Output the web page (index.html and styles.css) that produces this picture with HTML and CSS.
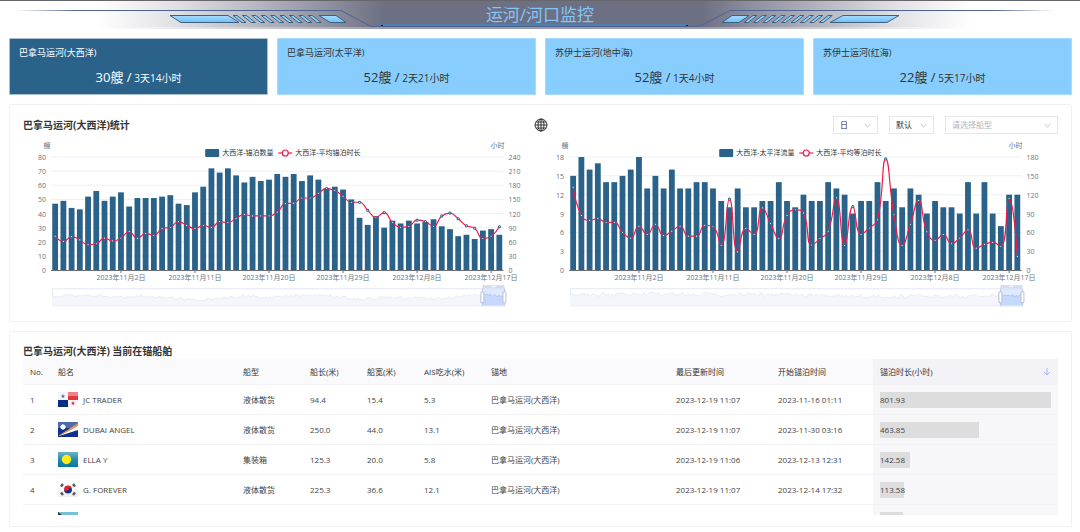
FILE: index.html
```html
<!DOCTYPE html>
<html lang="zh-CN">
<head>
<meta charset="utf-8">
<meta name="viewport" content="width=device-width, initial-scale=1">
<title>运河/河口监控</title>
<link rel="stylesheet" href="styles.css">
</head>
<body>
<header class="banner">
  <svg class="banner-art" viewBox="0 0 1080 29" preserveAspectRatio="none" aria-hidden="true">
    <defs>
      <linearGradient id="bg" x1="0" x2="1" y1="0" y2="0">
        <stop offset="0.09" stop-color="#fff"/>
        <stop offset="0.15" stop-color="#e6e6ea"/>
        <stop offset="0.23" stop-color="#bcbcc6"/>
        <stop offset="0.3" stop-color="#9192a1"/>
        <stop offset="0.355" stop-color="#6d6f83"/>
        <stop offset="0.65" stop-color="#6d6f83"/>
        <stop offset="0.7" stop-color="#9192a1"/>
        <stop offset="0.77" stop-color="#bcbcc6"/>
        <stop offset="0.84" stop-color="#e6e6ea"/>
        <stop offset="0.9" stop-color="#fff"/>
      </linearGradient>
      <linearGradient id="edge" x1="0" x2="1" y1="0" y2="0">
        <stop offset="0" stop-color="#4f6390" stop-opacity="0"/>
        <stop offset="0.06" stop-color="#4f6390"/>
        <stop offset="0.94" stop-color="#4f6390"/>
        <stop offset="1" stop-color="#4f6390" stop-opacity="0"/>
      </linearGradient>
      <linearGradient id="glow" x1="0" x2="0" y1="0" y2="1">
        <stop offset="0" stop-color="#a6dbff"/>
        <stop offset="1" stop-color="#6fc0fb"/>
      </linearGradient>
    </defs>
    <rect width="1080" height="29" fill="url(#bg)"/>
    <rect y="27" width="1080" height="2" fill="#fff" opacity="0.3"/>
    <rect width="1080" height="1" fill="#66666b"/>
    <path d="M15 10.5H341L371 26.5H699L730 10.5H1055" fill="none" stroke="url(#edge)"/>
    <path d="M382 25H688" stroke="#4785b5" stroke-width="2" opacity="0.8"/>
    <path d="M381 25.500h2M686 25.500h2" stroke="#0d1f3a"/>
    <g fill="url(#glow)" stroke="#3e617f">
      <path d="M170 15.500H228L239 22.500H181Z"/>
      <path d="M319 15.500H336L346 22.500H330Z"/>
      <path d="M722 22.500L732 15.500H749L739 22.500Z"/>
      <path d="M830 22.500L843 15.500H899L887 22.500Z"/>
    </g>
    <g id="stripes" fill="#8fd1ff" stroke="#3e617f"></g>
  </svg>
  <h1 class="banner-title">运河/河口监控</h1>
</header>

<main class="page">
  <section class="cards">
    <article class="card card-active"><h2 class="card-name">巴拿马运河(大西洋)</h2><p class="card-value"><span class="card-count">30艘 /</span> 3天14小时</p></article>
    <article class="card"><h2 class="card-name">巴拿马运河(太平洋)</h2><p class="card-value"><span class="card-count">52艘 /</span> 2天21小时</p></article>
    <article class="card"><h2 class="card-name">苏伊士运河(地中海)</h2><p class="card-value"><span class="card-count">52艘 /</span> 1天4小时</p></article>
    <article class="card"><h2 class="card-name">苏伊士运河(红海)</h2><p class="card-value"><span class="card-count">22艘 /</span> 5天17小时</p></article>
  </section>

  <section class="panel">
    <div class="toolbar">
      <h2 class="panel-title">巴拿马运河(大西洋)统计</h2>
      <svg class="globe" viewBox="0 0 14 14" fill="none" stroke="#333" aria-hidden="true">
        <circle cx="7" cy="7" r="6"/><ellipse cx="7" cy="7" rx="3" ry="6"/><path d="M7 1V13M1 7H13M2 4H12M2 10H12"/>
      </svg>
      <div class="filters">
        <label class="picker"><select class="picker-input" aria-label="周期"><option>日</option></select><svg class="chevron" viewBox="0 0 8 8" aria-hidden="true"><path d="M1 2L4 6L7 2"/></svg></label>
        <label class="picker"><select class="picker-input" aria-label="范围"><option>默认</option></select><svg class="chevron" viewBox="0 0 8 8" aria-hidden="true"><path d="M1 2L4 6L7 2"/></svg></label>
        <label class="picker picker-wide"><select class="picker-input picker-empty" aria-label="船型"><option>请选择船型</option></select><svg class="chevron" viewBox="0 0 8 8" aria-hidden="true"><path d="M1 2L4 6L7 2"/></svg></label>
      </div>
    </div>
    <div class="charts">
      <svg class="chart" id="chart-anchor" viewBox="0 0 517 175" role="img" aria-label="锚泊数量与平均锚泊时长"></svg>
      <svg class="chart" id="chart-flow" viewBox="0 0 517 175" role="img" aria-label="流量与平均等泊时长"></svg>
    </div>
  </section>

  <section class="panel panel-table">
    <h2 class="panel-title">巴拿马运河(大西洋) 当前在锚船舶</h2>
    <div class="table-view">
      <table class="ships">
        <colgroup><col class="w-no"><col><col class="w-type"><col class="w-len"><col class="w-beam"><col class="w-draft"><col><col class="w-time"><col class="w-time"><col></colgroup>
        <thead>
          <tr><th>No.</th><th>船名</th><th>船型</th><th>船长(米)</th><th>船宽(米)</th><th>AIS吃水(米)</th><th>锚地</th><th>最后更新时间</th><th>开始锚泊时间</th>
          <th class="sorted"><button class="sort" type="button">锚泊时长(小时)<svg class="sort-icon" viewBox="0 0 8 8" aria-hidden="true"><path d="M4 0V7M1 4L4 7L7 4"/></svg></button></th></tr>
        </thead>
        <tbody>
          <tr><td>1</td><td><div class="ship"><svg class="flag" viewBox="0 0 20 15"><rect width="20" height="15" fill="#f5f5f7"/><rect x="10" width="10" height="8" fill="#e2393f"/><rect x="10" width="10" height="4" fill="#ee8284"/><rect y="8" width="10" height="7" fill="#0b2c84"/><path d="M5 2l.6 1.400 1.400.1-1 1 .3 1.500L5 5.200 3.700 6l.3-1.500-1-1 1.400-.1z" fill="#4f6fb8"/><path d="M15 9l.6 1.400 1.400.1-1 1 .3 1.500-1.300-.8-1.300.8.3-1.500-1-1 1.400-.1z" fill="#d8323a"/></svg>JC TRADER</div></td><td>液体散货</td><td>94.4</td><td>15.4</td><td>5.3</td><td>巴拿马运河(大西洋)</td><td>2023-12-19 11:07</td><td>2023-11-16 01:11</td><td class="sorted"><div class="meter" style="width:100%">801.93</div></td></tr>
          <tr><td>2</td><td><div class="ship"><svg class="flag" viewBox="0 0 20 15"><rect width="20" height="15" fill="#12318a"/><rect width="20" height="6" fill="#4f69ae"/><path d="M0 14L20 1V4L1 14Z" fill="#f0924a"/><path d="M1 14L20 4V8L1 14Z" fill="#fff"/><circle cx="5" cy="5" r="2.500" fill="#fff"/><path d="M5 2V8M2 5H8" stroke="#fff" stroke-width=".6"/></svg>DUBAI ANGEL</div></td><td>液体散货</td><td>250.0</td><td>44.0</td><td>13.1</td><td>巴拿马运河(大西洋)</td><td>2023-12-19 11:07</td><td>2023-11-30 03:16</td><td class="sorted"><div class="meter" style="width:57.8%">463.85</div></td></tr>
          <tr><td>3</td><td><div class="ship"><svg class="flag" viewBox="0 0 20 15"><defs><linearGradient id="sea" x1="0" x2="0" y1="0" y2="1"><stop offset="0" stop-color="#6db5c9"/><stop offset=".5" stop-color="#208dae"/><stop offset="1" stop-color="#08789c"/></linearGradient></defs><rect width="20" height="15" fill="url(#sea)"/><circle cx="8.500" cy="7.500" r="4.700" fill="#ffe919"/></svg>ELLA Y</div></td><td>集装箱</td><td>125.3</td><td>20.0</td><td>5.8</td><td>巴拿马运河(大西洋)</td><td>2023-12-19 11:06</td><td>2023-12-13 12:31</td><td class="sorted"><div class="meter" style="width:17.8%">142.58</div></td></tr>
          <tr><td>4</td><td><div class="ship"><svg class="flag" viewBox="0 0 20 15"><defs><linearGradient id="paper" x1="0" x2="0" y1="0" y2="1"><stop offset="0" stop-color="#fff"/><stop offset="1" stop-color="#eeeeef"/></linearGradient></defs><rect width="20" height="15" fill="url(#paper)"/><path d="M6 7.500a4 4 0 0 1 8 0Z" fill="#d8262f"/><path d="M6 7.500a4 4 0 0 0 8 0Z" fill="#12318a"/><circle cx="8" cy="7.500" r="1.500" fill="#d8262f"/><circle cx="12" cy="7.500" r="1.500" fill="#12318a"/><path d="M3 4.500L5 2M15 2L17 4.500M3 10.500L5 13M15 13L17 10.500" stroke="#555" stroke-width="2.400"/></svg>G. FOREVER</div></td><td>液体散货</td><td>225.3</td><td>36.6</td><td>12.1</td><td>巴拿马运河(大西洋)</td><td>2023-12-19 11:07</td><td>2023-12-14 17:32</td><td class="sorted"><div class="meter" style="width:14.2%">113.58</div></td></tr>
          <tr><td></td><td><div class="ship"><svg class="flag" viewBox="0 0 20 15"><rect width="20" height="15" fill="#78c1d4"/><rect y="5" width="20" height="5" fill="#ffe04a"/><path d="M0 0L10 7.500L0 15Z" fill="#333"/></svg></div></td><td></td><td></td><td></td><td></td><td></td><td></td><td></td><td class="sorted"><div class="meter" style="width:13.4%"></div></td></tr>
        </tbody>
      </table>
    </div>
  </section>
</main>
<script src="charts.js"></script>
</body>
</html>
```
FILE: styles.css
```css
* { box-sizing: border-box; }

body {
  margin: 0;
  background: #fff;
  color: #333;
  font: 8px/12px "Open Sans", "Noto Sans CJK SC", sans-serif;
}

h1, h2, p { margin: 0; font-weight: 400; }

.banner { display: grid; height: 29px; }
.banner-art, .banner-title { grid-area: 1 / 1; }
.banner-art { width: 100%; height: 29px; display: block; }
.banner-title {
  place-self: center;
  font-size: 17px;
  line-height: 28px;
  color: #7fc6fb;
  z-index: 1;
}

.page { display: grid; gap: 9px; padding: 9px 8px 5px 9px; }

.cards { display: grid; grid-template-columns: repeat(4, 1fr); gap: 9px; }
.card {
  display: grid;
  gap: 8px;
  padding: 7px 9px 6px;
  border: 1px solid #a5d9fd;
  border-radius: 1px;
  background: #87ceff;
}
.card-active { background: #2a6289; border-color: #a9c0d0; color: #fff; }
.card-name { font-size: 9px; line-height: 13px; }
.card-value { font-size: 10px; line-height: 20px; text-align: center; }
.card-count { font-size: 13px; }

.panel {
  border: 1px solid #f1f1f3;
  border-radius: 2px;
  padding: 11px 13px 12px;
}
.panel-title { font-size: 10px; line-height: 16px; font-weight: 700; }

.toolbar { display: grid; grid-template-columns: 1fr auto 1fr; align-items: center; }
.globe { width: 14px; height: 14px; }
.filters { display: flex; gap: 11px; justify-content: flex-end; }
.picker {
  display: grid;
  align-items: center;
  width: 45px;
  height: 18px;
  border: 1px solid #e6e6ea;
}
.picker-wide { width: 113px; }
.picker-input, .chevron { grid-area: 1 / 1; }
.picker-input {
  appearance: none;
  width: 100%;
  border: 0;
  padding: 0 6px;
  background: transparent;
  color: #333;
  font: inherit;
}
.picker-empty { color: #b5b5bb; }
.chevron {
  width: 7px;
  height: 7px;
  margin-right: 6px;
  justify-self: end;
  pointer-events: none;
  fill: none;
  stroke: #c5c5cb;
}

.charts { display: grid; grid-template-columns: 1fr 1fr; }
.chart { display: block; width: 100%; }
.chart text { font-size: 7px; fill: #6e7079; }
.chart .legend { fill: #333; }

.panel-table { padding: 11px 13px; }
.table-view { height: 156px; overflow: hidden; }
.ships {
  width: 100%;
  table-layout: fixed;
  border-collapse: separate;
  border-spacing: 0;
  color: #444;
}
.w-no { width: 28px; }
.w-type, .w-draft { width: 67px; }
.w-len, .w-beam { width: 57px; }
.w-time { width: 102px; }
.ships th, .ships td {
  padding: 0 7px;
  border-bottom: 1px solid #f3f3f6;
  text-align: left;
  white-space: nowrap;
}
.ships th { height: 26px; background: #fafafc; color: #333; font-weight: 400; }
.ships td { height: 30px; }
.ships td.sorted { background: #f7f7f9; }
.ships th.sorted { background: #f2f2f7; }
.sort {
  display: flex;
  justify-content: space-between;
  align-items: center;
  width: 100%;
  padding: 0;
  border: 0;
  background: none;
  color: inherit;
  font: inherit;
}
.sort-icon { width: 8px; height: 8px; fill: none; stroke: #a3b4fb; }
.ship { display: flex; align-items: center; gap: 5px; }
.flag { width: 20px; height: 15px; }
.meter { height: 16px; line-height: 16px; background: #ddd; }
```
FILE: charts.js
```js
const NS = 'http://www.w3.org/2000/svg';
const BAR = '#2a6289';
const LINE = '#f5194b';

function add(parent, name, attrs, text) {
  const el = document.createElementNS(NS, name);
  for (const key in attrs) el.setAttribute(key, attrs[key]);
  if (text !== undefined) el.textContent = text;
  parent.appendChild(el);
  return el;
}

// Smooth path whose control points never leave the box between neighbours.
function smoothPath(pts) {
  const clamp = (v, a, b) => Math.max(Math.min(a, b), Math.min(Math.max(a, b), v));
  let d = `M${pts[0]}`;
  let out = pts[0];
  for (let i = 1; i < pts.length; i++) {
    const p = pts[i], prev = pts[i - 1], next = pts[i + 1];
    let inn = p, nextOut = p;
    if (next) {
      const lp = Math.hypot(p[0] - prev[0], p[1] - prev[1]);
      const ln = Math.hypot(next[0] - p[0], next[1] - p[1]);
      const r = ln / (ln + lp);
      nextOut = p.map((v, k) => clamp(v + (next[k] - prev[k]) * 0.5 * r, v, next[k]));
      inn = p.map((v, k) => clamp(v - (nextOut[k] - v) * lp / ln, v, prev[k]));
      nextOut = p.map((v, k) => v + (v - inn[k]) * ln / lp);
    }
    d += `C${out} ${inn} ${p}`;
    out = nextOut;
  }
  return d;
}

function overview(seed, spiky) {
  const pts = [];
  let s = seed;
  for (let x = 0; x <= 453; x += 2) {
    s = (s * 16807) % 2147483647;
    const noise = s / 2147483647 - 0.5;
    const wave = spiky ? Math.sin(x / 70) : Math.sin(x / 13) + Math.sin(x / 31) * 1.5;
    pts.push([29 + x, (spiky ? 161 : 163) - wave + noise * (spiky ? 4 : 3)]);
  }
  return pts;
}

function draw(id, o) {
  const svg = document.getElementById(id);
  const left = 28, width = 452, top = 23, bottom = 136, step = width / o.bars.length;
  const rows = o.left.length - 1;
  for (let i = 0; i <= rows; i++) {
    const y = bottom - (bottom - top) * i / rows;
    add(svg, 'path', { d: `M${left} ${y}H${left + width}`, stroke: '#eaeff8' });
    add(svg, 'text', { x: 23, y: y + 3, 'text-anchor': 'end' }, o.left[i]);
    add(svg, 'text', { x: 485, y: y + 3 }, o.right[i]);
  }
  add(svg, 'text', { x: 24, y: 14, 'text-anchor': 'middle' }, '艘');
  add(svg, 'text', { x: 474, y: 14, 'text-anchor': 'middle' }, '小时');

  const cx = i => left + step * (i + 0.5);
  const max = o.left[rows], maxLine = o.right[rows];
  o.bars.forEach((v, i) => {
    const h = (bottom - top) * v / max;
    add(svg, 'rect', { x: cx(i) - 2.9, y: bottom - h, width: 5.8, height: h, fill: BAR });
  });
  add(svg, 'path', { d: `M${left} 136.5H${left + width}`, stroke: '#6e7079' });
  ['11月2日', '11月11日', '11月20日', '11月29日', '12月8日', '12月17日'].forEach((t, k) => {
    const x = cx(8 + 9 * k);
    add(svg, 'path', { d: `M${x} 136v3`, stroke: '#6e7079' });
    add(svg, 'text', { x, y: 146, 'text-anchor': 'middle' }, '2023年' + t);
  });

  const pts = o.line.map((v, i) => [cx(i), bottom - (bottom - top) * v / maxLine]);
  add(svg, 'path', { d: smoothPath(pts), fill: 'none', stroke: LINE, 'stroke-width': 1.2 });
  pts.forEach(p => add(svg, 'circle', { cx: p[0], cy: p[1], r: 1.1, fill: '#fff', stroke: BAR, 'stroke-width': 1 }));

  const lx = o.legendX;
  add(svg, 'rect', { x: lx, y: 15, width: 14, height: 8, rx: 1, fill: BAR });
  add(svg, 'text', { x: lx + 17, y: 21, class: 'legend' }, o.names[0]);
  const mx = lx + o.legendGap;
  add(svg, 'path', { d: `M${mx} 19h14`, stroke: LINE, 'stroke-width': 1.2 });
  add(svg, 'circle', { cx: mx + 7, cy: 19, r: 3, fill: '#fff', stroke: LINE, 'stroke-width': 1.2 });
  add(svg, 'text', { x: mx + 17, y: 21, class: 'legend' }, o.names[1]);

  // Zoom slider
  const wave = overview(o.seed, o.spiky);
  const area = `M29 171L${wave.join('L')}V171Z`;
  add(svg, 'rect', { x: 29.5, y: 154.5, width: 452, height: 17, rx: 1, fill: '#fff', stroke: '#e3e8f6' });
  add(svg, 'path', { d: area, fill: '#f4f6fb' });
  add(svg, 'path', { d: `M${wave.join('L')}`, fill: 'none', stroke: '#dfe5f2', 'stroke-width': 0.7 });
  add(svg, 'rect', { x: 459, y: 154, width: 22, height: 18, fill: '#d3e0fd', opacity: 0.7 });
  const tail = wave.filter(p => p[0] > 458 && p[0] < 482);
  add(svg, 'path', { d: `M459 171L${tail.join('L')}V171Z`, fill: '#c6d8fc' });
  add(svg, 'path', { d: `M${tail.join('L')}`, fill: 'none', stroke: '#a4bdf5', 'stroke-width': 0.7 });
  add(svg, 'rect', { x: 459, y: 151, width: 22, height: 3, fill: '#d5dcec' });
  add(svg, 'path', { d: 'M468 152.5h4', stroke: '#fff' });
  [459, 481].forEach(x => {
    add(svg, 'path', { d: `M${x} 154v18`, stroke: '#c3cde3' });
    add(svg, 'rect', { x: x - 1.5, y: 157.5, width: 3, height: 11, rx: 1, fill: '#fff', stroke: '#b3c0dc' });
  });
}

draw('chart-anchor', {
  left: [0, 10, 20, 30, 40, 50, 60, 70, 80],
  right: [0, 30, 60, 90, 120, 150, 180, 210, 240],
  names: ['大西洋-锚泊数量', '大西洋-平均锚泊时长'],
  legendX: 182, legendGap: 73, seed: 71, spiky: false,
  bars: [47, 49, 44, 43, 52, 56, 49, 52, 55, 45, 51, 51, 51, 52, 53, 47, 46, 55, 59, 72, 69, 72, 67, 62, 66, 63, 64, 68, 66, 68, 63, 67, 64, 58, 59, 57, 50, 37, 32, 38, 30, 35, 33, 35, 33, 34, 36, 31, 29, 24, 25, 22, 28, 29, 25],
  line: [72, 61, 71, 64, 54, 56, 68, 62, 68, 82, 67, 78, 74, 88, 91, 103, 95, 88, 95, 90, 103, 101, 110, 118, 115, 115, 115, 123, 141, 142, 153, 153, 163, 173, 169, 157, 144, 144, 127, 112, 122, 101, 91, 93, 106, 103, 93, 115, 121, 109, 94, 89, 67, 72, 92]
});

draw('chart-flow', {
  left: [0, 3, 6, 9, 12, 15, 18],
  right: [0, 30, 60, 90, 120, 150, 180],
  names: ['大西洋-太平洋流量', '大西洋-平均等泊时长'],
  legendX: 178, legendGap: 80, seed: 915, spiky: true,
  bars: [15, 18, 16, 17, 14, 14, 15, 16, 18, 13, 15, 13, 16, 13, 13, 14, 14, 13, 11, 10, 13, 10, 10, 11, 11, 14, 11, 10, 12, 11, 11, 14, 13, 12, 9, 11, 11, 14, 11, 13, 10, 13, 12, 9, 11, 10, 10, 9, 14, 9, 14, 9, 7, 12, 12],
  line: [132, 87, 79, 82, 76, 76, 60, 51, 70, 57, 73, 55, 62, 70, 54, 54, 71, 69, 39, 113, 29, 66, 57, 99, 74, 50, 87, 96, 91, 40, 50, 62, 115, 39, 101, 57, 67, 80, 177, 88, 39, 73, 111, 61, 47, 57, 42, 51, 64, 35, 41, 44, 38, 114, 22]
});

const stripes = document.getElementById('stripes');
for (let i = 0; i < 9; i++) {
  const a = 233 + i * 9.4, b = 744 + i * 9.4;
  add(stripes, 'path', { d: `M${a} 15.5h4l9 7h-4Z` });
  add(stripes, 'path', { d: `M${b} 22.5h4l9 -7h-4Z` });
}
```
